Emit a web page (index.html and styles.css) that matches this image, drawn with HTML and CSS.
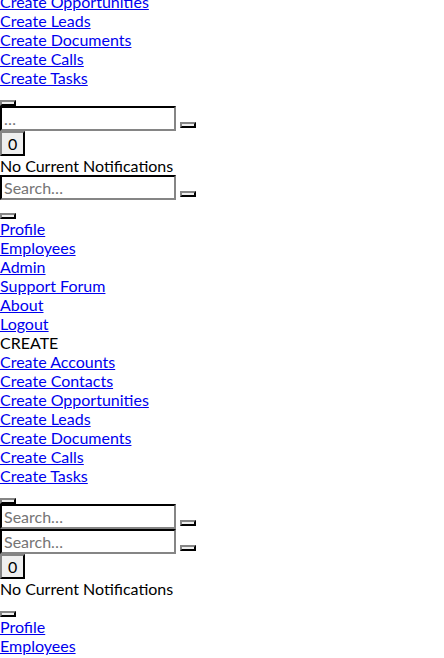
FILE: index.html
```html
<!DOCTYPE html>
<html>
<head>
<meta charset="utf-8">
<link rel="stylesheet" href="styles.css">
</head>
<body>
<div class="page">
  <div class="menu">
    <a href="#">Create Opportunities</a>
    <a href="#">Create Leads</a>
    <a href="#">Create Documents</a>
    <a href="#">Create Calls</a>
    <a href="#">Create Tasks</a>
  </div>
  <div class="line"><button class="btn"></button></div>
  <form class="search"><input class="field" type="text" placeholder="…"> <button class="btn"></button></form>
  <div class="line"><button class="btn count">0</button></div>
  <div class="note">No Current Notifications</div>
  <form class="search"><input class="field" type="text" placeholder="Search…"> <button class="btn"></button></form>
  <div class="line"><button class="btn"></button></div>
  <div class="menu">
    <a href="#">Profile</a>
    <a href="#">Employees</a>
    <a href="#">Admin</a>
    <a href="#">Support Forum</a>
    <a href="#">About</a>
    <a href="#">Logout</a>
  </div>
  <div class="note">CREATE</div>
  <div class="menu">
    <a href="#">Create Accounts</a>
    <a href="#">Create Contacts</a>
    <a href="#">Create Opportunities</a>
    <a href="#">Create Leads</a>
    <a href="#">Create Documents</a>
    <a href="#">Create Calls</a>
    <a href="#">Create Tasks</a>
  </div>
  <div class="line"><button class="btn"></button></div>
  <form class="search"><input class="field" type="text" placeholder="Search…"> <button class="btn"></button></form>
  <form class="search"><input class="field" type="text" placeholder="Search…"> <button class="btn"></button></form>
  <div class="line"><button class="btn count">0</button></div>
  <div class="note">No Current Notifications</div>
  <div class="line"><button class="btn"></button></div>
  <div class="menu">
    <a href="#">Profile</a>
    <a href="#">Employees</a>
    <a href="#">Admin</a>
    <a href="#">Support Forum</a>
  </div>
</div>
</body>
</html>
```
FILE: styles.css
```css
html, body {
  margin: 0;
  padding: 0;
  background: #ffffff;
}
body {
  font-family: Lato, "Liberation Sans", sans-serif;
  font-size: 16px;
  color: #000000;
  overflow: hidden;
}
.page {
  margin-top: -8px;
}
.menu {
  display: flex;
  flex-direction: column;
  align-items: flex-start;
}
.menu a {
  color: #0000ee;
  text-decoration: underline;
  line-height: normal;
}
.line {
  line-height: normal;
}
.note {
  line-height: normal;
}
.search {
  margin: 0;
  line-height: normal;
}
.field {
  box-sizing: border-box;
  width: 176px;
  font-family: inherit;
  font-size: 16px;
  padding: 1px 2px;
  border: 2px inset #767676;
  border-color: #3b3b3b #858585 #858585 #3b3b3b;
  background: #ffffff;
  color: #000000;
  margin: 0;
}
.field::placeholder {
  color: #757575;
}
.btn {
  font-family: inherit;
  font-size: 16px;
  padding: 1px 6px;
  margin: 0;
  border: 2px outset #767676;
  border-color: #858585 #3b3b3b #3b3b3b #858585;
  background: #efefef;
  color: #000000;
}
.count {
  line-height: normal;
}
```
